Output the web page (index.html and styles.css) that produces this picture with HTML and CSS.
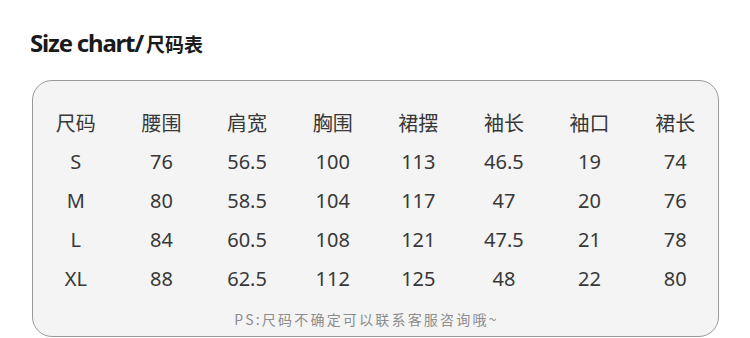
FILE: index.html
```html
<!DOCTYPE html>
<html lang="zh">
<head>
<meta charset="utf-8">
<link rel="stylesheet" href="styles.css">
</head>
<body>
<div class="page">
  <h1 class="title"><span class="title-en">Size chart/</span><span class="title-cn">尺码表</span></h1>
  <div class="card">
    <div class="table">
      <div class="cell head">尺码</div><div class="cell head">腰围</div><div class="cell head">肩宽</div><div class="cell head">胸围</div><div class="cell head">裙摆</div><div class="cell head">袖长</div><div class="cell head">袖口</div><div class="cell head">裙长</div>
      <div class="cell">S</div><div class="cell">76</div><div class="cell">56.5</div><div class="cell">100</div><div class="cell">113</div><div class="cell">46.5</div><div class="cell">19</div><div class="cell">74</div>
      <div class="cell">M</div><div class="cell">80</div><div class="cell">58.5</div><div class="cell">104</div><div class="cell">117</div><div class="cell">47</div><div class="cell">20</div><div class="cell">76</div>
      <div class="cell">L</div><div class="cell">84</div><div class="cell">60.5</div><div class="cell">108</div><div class="cell">121</div><div class="cell">47.5</div><div class="cell">21</div><div class="cell">78</div>
      <div class="cell">XL</div><div class="cell">88</div><div class="cell">62.5</div><div class="cell">112</div><div class="cell">125</div><div class="cell">48</div><div class="cell">22</div><div class="cell">80</div>
    </div>
    <p class="note">PS:尺码不确定可以联系客服咨询哦~</p>
  </div>
</div>
</body>
</html>
```
FILE: styles.css
```css
html, body {
  margin: 0;
  padding: 0;
  background: #ffffff;
}
.page {
  width: 750px;
  height: 338px;
  padding: 28px 31px 0 32px;
  box-sizing: border-box;
  font-family: "Noto Sans", "Noto Sans CJK SC", sans-serif;
  color: #333333;
}
.title {
  margin: 0 0 0 -2px;
  height: 52px;
  line-height: 30px;
  font-weight: 700;
  color: #1a1a1a;
  display: flex;
  align-items: baseline;
}
.title-en {
  font-size: 24px;
  letter-spacing: -1.2px;
}
.title-cn {
  font-size: 19px;
  margin-left: 3px;
  font-family: "Noto Sans CJK SC", sans-serif;
}
.card {
  height: 257px;
  box-sizing: border-box;
  border: 1px solid #9a9a9a;
  border-radius: 20px;
  background: #f4f4f4;
  padding-top: 22px;
}
.table {
  display: grid;
  grid-template-columns: repeat(8, 1fr);
  grid-auto-rows: 39px;
}
.cell {
  text-align: center;
  font-size: 20px;
  line-height: 39px;
  color: #383838;
}
.cell.head {
  font-family: "Noto Sans CJK SC", sans-serif;
}
.note {
  margin: 11px 0 0 0;
  text-align: center;
  font-size: 14px;
  line-height: 20px;
  letter-spacing: 2.2px;
  color: #8c8c8c;
  padding-right: 18px;
  font-family: "Noto Sans CJK SC", sans-serif;
}
```
